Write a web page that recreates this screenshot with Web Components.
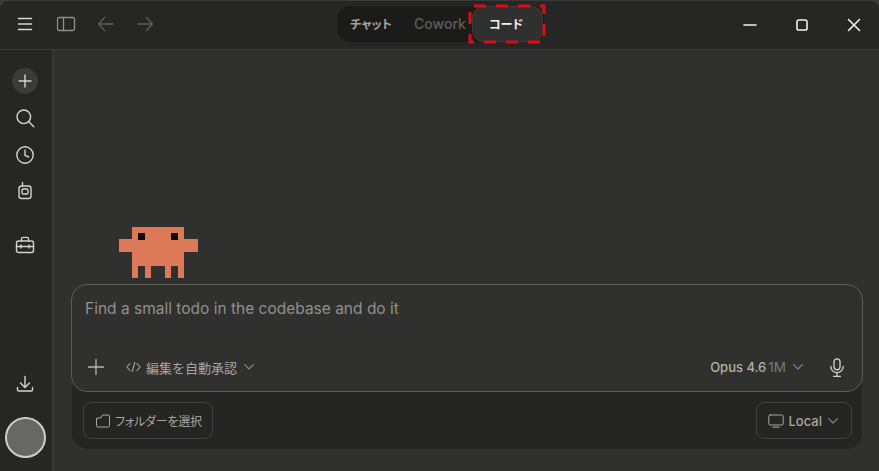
<!DOCTYPE html>
<html lang="ja">
<head>
<meta charset="utf-8">
<style>
html,body{margin:0;height:100%;background:#3a3a38;overflow:hidden}
body{font-family:Inter,"Noto Sans CJK JP",sans-serif}
</style>
</head>
<body>
<app-window></app-window>
<template id="t-tabs">
<style>
:host{display:flex;align-items:center;position:relative;height:36px;background:#1b1b19;border-radius:13px;margin:0 0 2px 2px;box-sizing:border-box;width:207px;font-size:12px;font-feature-settings:"palt"}
.t{display:flex;align-items:center;justify-content:center;height:34px;font-weight:600;color:#a5a5a0;box-sizing:border-box;padding-bottom:1px}
.a{width:64px;margin-left:2px}
.b{width:70px;color:#5f5f5b;font-size:14px;font-weight:500;padding-left:4px}
.c{width:69px;background:#30302e;border-radius:11px;color:#f4f3ee;box-shadow:0 0 0 1px #3a3a37;padding-right:3px}
svg{position:absolute;left:133px;top:0;overflow:visible}
</style>
<div class="t a">チャット</div><div class="t b">Cowork</div><div class="t c">コード</div>
<svg width="74" height="36" fill="none"><rect x="0" y="0" width="74" height="36" stroke="#e00a14" stroke-width="3" stroke-dasharray="12 10" stroke-dashoffset="-4"/></svg>
</template>
<template id="t-title">
<style>
:host{display:grid;grid-template-columns:1fr auto 1fr;align-items:center;height:48px;flex:none;background:#262624;border-bottom:1px solid #3c3c3a;border-radius:8px 8px 0 0;box-sizing:content-box}
.l,.r{display:flex;align-items:center}
.l{padding:0 0 2px 15px}
.r{justify-content:flex-end}
svg{display:block;fill:none;stroke-linecap:round;stroke-linejoin:round}
.r svg{stroke:#f0efea;stroke-width:1.6}
</style>
<div class="l">
<svg width="20" height="20" viewBox="0 0 20 20" stroke="#d8d7d1" stroke-width="1.5"><path d="M3.5 4.5h13M3.5 10h13M3.5 15.5h13"/></svg>
<svg style="margin-left:21px" width="20" height="20" viewBox="0 0 20 20" stroke="#8f8e89" stroke-width="1.3"><rect x="1.5" y="3.5" width="17" height="13" rx="1.8"/><path d="M7.5 3.5v13"/></svg>
<svg style="margin-left:21px" width="18" height="16" viewBox="0 0 18 16" stroke="#5f5f5b" stroke-width="1.3"><path d="M16 8H1.500M7.500 1.500 1.500 8 7.500 14.500"/></svg>
<svg style="margin-left:21px" width="18" height="16" viewBox="0 0 18 16" stroke="#5f5f5b" stroke-width="1.3"><path d="M2 8h14.500M10.500 1.500 16.500 8 10.500 14.500"/></svg>
</div>
<slot></slot>
<div class="r">
<svg width="14" height="14" viewBox="0 0 14 14"><path d="M1 7h12"/></svg>
<svg style="margin-left:38px" width="14" height="14" viewBox="0 0 14 14"><rect x="2" y="2" width="10" height="10" rx="1.8"/></svg>
<svg style="margin-left:38px;margin-right:18px" width="14" height="14" viewBox="0 0 14 14"><path d="M1.5 1.5l11 11M12.5 1.5l-11 11"/></svg>
</div>
</template>
<template id="t-side">
<style>
:host{display:flex;flex-direction:column;align-items:center;width:50px;padding:18px 2px 13px 0;background:#262624;border-right:1px solid #3c3c3a;flex:none;box-sizing:content-box}
svg{display:block;fill:none;stroke:#d4d3cd;stroke-width:1.4;stroke-linecap:round;stroke-linejoin:round}
.plus{width:26px;height:26px;border-radius:50%;background:#3b3b39;display:flex;align-items:center;justify-content:center}
.i{height:37px;display:flex;align-items:center;justify-content:center}
.sp{flex:1}
.av{width:37px;height:37px;border-radius:50%;background:#676766;border:2px solid #cfcec6}
</style>
<div class="plus"><svg width="16" height="16" viewBox="0 0 16 16" stroke="#b0afa9" stroke-width="1.3"><path d="M8 2v12M2 8h12"/></svg></div>
<div class="i" style="margin-top:5px"><svg width="20" height="20" viewBox="0 0 20 20"><circle cx="8.8" cy="8.8" r="6.8"/><path d="M13.8 13.8l5 5"/></svg></div>
<div class="i"><svg width="20" height="20" viewBox="0 0 20 20"><circle cx="10" cy="10" r="8.2"/><path d="M10 5v5.4l3.6 1.600"/></svg></div>
<div class="i" style="margin-top:-1px"><svg width="16" height="20" viewBox="0 0 16 20"><rect x="2" y="5" width="12" height="12.500" rx="2.600"/><rect x="5" y="8" width="6" height="5" rx="1.200"/><path d="M5.500 5V1.500"/></svg></div>
<div class="i" style="margin-top:17px"><svg width="20" height="18" viewBox="0 0 20 18"><rect x="1.500" y="5" width="17" height="11.500" rx="2"/><path d="M6.500 5V3a1.600 1.600 0 0 1 1.600-1.600h3.800A1.600 1.600 0 0 1 13.500 3v2M1.500 10.500h17M6 9v3M14 9v3"/></svg></div>
<div class="sp"></div>
<svg width="18" height="18" viewBox="0 0 18 18"><path d="M9 1.500v10.500M4.500 8 9 12.500 13.500 8M1.500 12.500v2.200a1.300 1.300 0 0 0 1.300 1.300h12.400a1.300 1.300 0 0 0 1.300-1.300v-2.200"/></svg>
<div class="av" style="margin-top:24px"></div>
</template>
<template id="t-comp">
<style>
:host{display:block;background:#252523;border-radius:16px;border:1px solid #33332f;border-top:0;border-left:0;margin-left:1px;box-sizing:border-box}
.box{margin:0 -1px 0 -1px;background:#30302e;border:1px solid #5c5c58;border-radius:16px;height:108px;box-sizing:border-box;padding:14px 13px 0 13px;display:flex;flex-direction:column}
.ph{font-size:15.5px;line-height:20px;color:#91918a}
.row{display:flex;align-items:center;margin-top:auto;height:20px;margin-bottom:14px;font-size:13px;color:#a8a79f}
svg{display:block;fill:none;stroke-linecap:round;stroke-linejoin:round}
.gr{flex:1}
.op{font-size:13px;font-weight:500;color:#b3b2aa}.m{color:#7a7974;font-size:13.5px;margin-left:2px}
.foot{display:flex;justify-content:space-between;align-items:center;padding:10px 10px 10px 11px;height:37px}
.b{height:37px;box-sizing:border-box;border:1px solid #42423f;border-radius:8px;display:flex;align-items:center;font-size:13px;color:#a8a79f;padding:0 11px}
.j{font-size:12px;letter-spacing:-.2px;font-feature-settings:"palt"}
</style>
<div class="box">
<div class="ph">Find a small todo in the codebase and do it</div>
<div class="row">
<svg style="margin-left:3px" width="16" height="16" viewBox="0 0 16 16" stroke="#b5b4ac" stroke-width="1.3"><path d="M8 .5v15M.5 8h15"/></svg>
<svg style="margin-left:22px" width="15" height="12" viewBox="0 0 15 12" stroke="#a8a79f" stroke-width="1.1"><path d="M4 2.500.8 6 4 9.500M11 2.500 14.200 6 11 9.500M8.800 1.500 6.200 10.500"/></svg>
<span style="margin-left:5px">編集を自動承認</span>
<svg style="margin-left:7px" width="10" height="6" viewBox="0 0 10 6" stroke="#8a8984" stroke-width="1.100"><path d="M.7.700 5 5 9.300.700"/></svg>
<div class="gr"></div>
<span class="op">Opus 4.6</span><span class="m">1M</span>
<svg style="margin-left:7px" width="10" height="6" viewBox="0 0 10 6" stroke="#8a8984" stroke-width="1.100"><path d="M.7.700 5 5 9.300.700"/></svg>
<svg style="margin-left:27px;margin-right:5px" width="14" height="19" viewBox="0 0 14 19" stroke="#d4d3cd" stroke-width="1.300"><rect x="4" y=".8" width="6" height="11" rx="3"/><path d="M.8 8.500a6.200 6.200 0 0 0 12.400 0M7 14.700v3.500M3.500 18.300h7"/></svg>
</div>
</div>
<div class="foot">
<div class="b" style="padding-right:10px"><svg style="margin-right:3px" width="17" height="14" viewBox="0 0 17 14" stroke="#a8a79f" stroke-width="1"><path d="M1.500 4.500v7.300a1.200 1.200 0 0 0 1.200 1.200h10.600a1.200 1.200 0 0 0 1.200-1.200V2.200A1.200 1.200 0 0 0 13.300 1H7.500L5.800 4H2.700a1.200 1.200 0 0 0-1.200.5z"/></svg><span class="j">フォルダーを選択</span></div>
<div class="b" style="padding-right:13px"><svg style="margin-right:5px" width="16" height="14" viewBox="0 0 16 14" stroke="#a8a79f" stroke-width="1"><rect x=".8" y="1" width="14.400" height="10" rx="1.400"/><path d="M5 13.200h6"/></svg><span style="font-weight:500">Local</span><svg style="margin-left:6px" width="10" height="6" viewBox="0 0 10 6" stroke="#8a8984" stroke-width="1.100"><path d="M.7.700 5 5 9.300.700"/></svg></div>
</div>
</template>
<template id="t-crab">
<style>:host{display:block;width:79px;height:52px;margin:0 0 6px 48px}svg{display:block}</style>
<svg width="79" height="52" viewBox="0 0 79 52" shape-rendering="crispEdges"><path fill="#dc7a58" d="M13 1h52v12h14v13H65v26h-6V40H52v12h-6V40H32v12h-6V40h-7v12h-6V26H0V13h13z"/><path fill="#0b0b0b" d="M19 7h7v7h-7zM52 7h7v7h-7z"/></svg>
</template>
<template id="t-window">
<style>
:host{display:flex;flex-direction:column;height:471px;width:879px;color:#ddd;font-family:Inter,"Noto Sans CJK JP",sans-serif;box-sizing:border-box;padding-top:1px}
.body{flex:1;display:flex;min-height:0}
main{flex:1;background:#30302e;display:flex;flex-direction:column;justify-content:flex-end;padding:0 16px 21px 18px;min-width:0}
</style>
<title-bar><mode-tabs></mode-tabs></title-bar>
<div class="body">
<side-bar></side-bar>
<main><pixel-crab></pixel-crab><composer-panel></composer-panel></main>
</div>
</template>
<script>
const def=(n,t)=>customElements.define(n,class extends HTMLElement{constructor(){super();this.attachShadow({mode:'open'}).appendChild(document.getElementById(t).content.cloneNode(true))}});
def('mode-tabs','t-tabs');def('title-bar','t-title');def('side-bar','t-side');def('composer-panel','t-comp');def('pixel-crab','t-crab');def('app-window','t-window');
</script>
</body>
</html>
